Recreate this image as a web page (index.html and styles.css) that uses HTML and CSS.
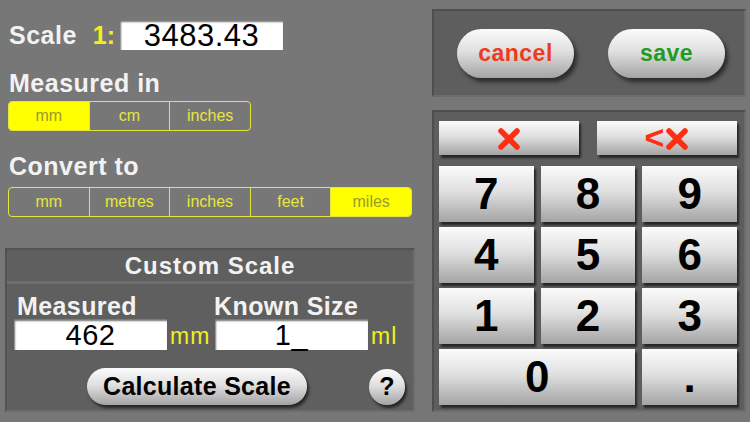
FILE: index.html
```html
<!DOCTYPE html>
<html lang="en">
<head>
    <meta charset="UTF-8">
    <meta name="viewport" content="width=device-width, initial-scale=1.0">
    <title>Scale Converter</title>
    <link rel="stylesheet" href="styles.css">
</head>
<body>
    <div id="app">
        <div id="left">
            <div class="scale-row">
                <span class="title">Scale</span>
                <span class="ratio">1:</span>
                <div class="field scale-field">3483.43</div>
            </div>

            <h2 class="title section measured-title">Measured in</h2>
            <div class="segments seg-measured">
                <span class="seg on">mm</span>
                <span class="seg">cm</span>
                <span class="seg">inches</span>
            </div>

            <h2 class="title section convert-title">Convert to</h2>
            <div class="segments seg-convert">
                <span class="seg">mm</span>
                <span class="seg">metres</span>
                <span class="seg">inches</span>
                <span class="seg">feet</span>
                <span class="seg on">miles</span>
            </div>

            <!-- Custom Scale Section -->
            <div id="custom">
                <div class="custom-head">Custom Scale</div>
                <div class="custom-body">
                    <div class="custom-grid">
                        <span class="field-label">Measured</span>
                        <span class="field-label known">Known Size</span>
                        <div class="field small-field">462</div>
                        <span class="unit">mm</span>
                        <div class="field small-field">1_</div>
                        <span class="unit">ml</span>
                    </div>
                    <div class="custom-actions">
                        <button type="button" class="calc">Calculate Scale</button>
                        <button type="button" class="help">?</button>
                    </div>
                </div>
            </div>
        </div>

        <div id="right">
            <div class="panel actions">
                <button type="button" class="pill cancel">cancel</button>
                <button type="button" class="pill save">save</button>
            </div>

            <div class="panel keypad">
                <div class="clear-row">
                    <button type="button" class="key clear">
                        <svg class="cross" viewBox="0 0 24 24"><path d="M4 4 L20 20 M20 4 L4 20"/></svg>
                    </button>
                    <button type="button" class="key clear">
                        <span class="back">&lt;</span>
                        <svg class="cross" viewBox="0 0 24 24"><path d="M4 4 L20 20 M20 4 L4 20"/></svg>
                    </button>
                </div>
                <div class="digits">
                    <button type="button" class="key">7</button>
                    <button type="button" class="key">8</button>
                    <button type="button" class="key">9</button>
                    <button type="button" class="key">4</button>
                    <button type="button" class="key">5</button>
                    <button type="button" class="key">6</button>
                    <button type="button" class="key">1</button>
                    <button type="button" class="key">2</button>
                    <button type="button" class="key">3</button>
                    <button type="button" class="key zero">0</button>
                    <button type="button" class="key">.</button>
                </div>
            </div>
        </div>
    </div>
</body>
</html>
```

FILE: styles.css
```css
* {
    margin: 0;
    padding: 0;
    box-sizing: border-box;
    font-family: "Liberation Sans", Arial, Helvetica, sans-serif;
}

body {
    background-color: #777777;
    width: 750px;
    height: 422px;
    overflow: hidden;
}

button {
    border: none;
    font-family: "Liberation Sans", Arial, Helvetica, sans-serif;
    cursor: pointer;
}

#app {
    display: flex;
    width: 750px;
    height: 422px;
}

#left {
    width: 420px;
}

.title {
    color: #f2f2f2;
    font-size: 25px;
    font-weight: bold;
    letter-spacing: 0.5px;
}

.scale-row {
    display: flex;
    align-items: center;
    height: 30px;
    margin-top: 20px;
    padding-left: 9px;
}

.ratio {
    color: #f0f020;
    font-size: 25px;
    font-weight: bold;
    margin-left: 16px;
}

.field {
    background-color: #ffffff;
    color: #000000;
    text-align: center;
    box-shadow: inset 1px 2px 2px rgba(0, 0, 0, 0.55);
}

.scale-field {
    width: 163px;
    height: 30px;
    margin-left: 5px;
    font-size: 31px;
    letter-spacing: 0.5px;
    line-height: 32px;
}

.section {
    height: 28px;
    line-height: 28px;
    padding-left: 9px;
}

.measured-title {
    margin-top: 19px;
}

.convert-title {
    margin-top: 21px;
}

.segments {
    display: flex;
    height: 30px;
    margin-left: 8px;
    border: 1px solid #e4e43c;
    border-radius: 4px;
    overflow: hidden;
}

.seg-measured {
    width: 243px;
    margin-top: 4px;
}

.seg-convert {
    width: 404px;
    margin-top: 7px;
}

.seg {
    flex: 1;
    text-align: center;
    line-height: 28px;
    font-size: 16px;
    color: #e6e640;
    border-left: 1px solid #e4e43c;
}

.seg:first-child {
    border-left: none;
}

.seg.on {
    background-color: #ffff00;
    color: #9a9a2c;
}

#custom {
    width: 410px;
    height: 164px;
    margin-top: 31px;
    margin-left: 5px;
    background-color: #5f5f5f;
    border: 2px solid;
    border-color: #525252 #6c6c6c #6c6c6c #525252;
}

.custom-head {
    height: 34px;
    line-height: 32px;
    text-align: center;
    color: #f2f2f2;
    font-size: 24px;
    font-weight: bold;
    letter-spacing: 1px;
    border-bottom: 3px solid #6e6e6e;
}

.custom-body {
    padding: 10px 7px 0 7px;
}

.custom-grid {
    display: grid;
    grid-template-columns: 153px 48px 153px auto;
    grid-template-rows: 24px 31px;
    row-gap: 1px;
}

.field-label {
    grid-column: 1 / 3;
    padding-left: 3px;
    color: #f2f2f2;
    font-size: 25px;
    font-weight: bold;
    letter-spacing: 0.4px;
    line-height: 24px;
}

.field-label.known {
    grid-column: 3 / 5;
    padding-left: 0;
    margin-left: -1px;
}

.small-field {
    font-size: 29px;
    letter-spacing: 0.5px;
    line-height: 33px;
}

.unit {
    color: #f0f020;
    font-size: 23px;
    letter-spacing: 1px;
    line-height: 34px;
    padding-left: 3px;
}

.custom-actions {
    display: flex;
    align-items: center;
    margin-top: 18px;
}

.calc,
.help,
.pill,
.key {
    background: linear-gradient(to bottom, #fbfbfb 0%, #e0e0e0 45%, #a4a4a4 100%);
    color: #000000;
    font-weight: bold;
}

.calc {
    width: 220px;
    height: 37px;
    margin-left: 73px;
    border-radius: 19px;
    font-size: 25px;
    letter-spacing: 0.3px;
    box-shadow: 2px 3px 3px rgba(0, 0, 0, 0.6);
}

.help {
    width: 36px;
    height: 36px;
    margin-left: 62px;
    border-radius: 50%;
    font-size: 25px;
    box-shadow: 2px 3px 3px rgba(0, 0, 0, 0.6);
}

#right {
    width: 314px;
    margin-left: 12px;
    padding-top: 9px;
}

.panel {
    background-color: #5e5e5e;
    border: 2px solid;
    border-color: #4e4e4e #6c6c6c #6c6c6c #4e4e4e;
}

.actions {
    display: flex;
    align-items: center;
    height: 88px;
    padding-left: 23px;
    gap: 34px;
}

.pill {
    width: 117px;
    height: 49px;
    border-radius: 25px;
    font-size: 23px;
    letter-spacing: 0.5px;
    box-shadow: 3px 4px 4px rgba(0, 0, 0, 0.55);
}

.cancel {
    color: #ee3a1e;
}

.save {
    color: #1f9a22;
}

.keypad {
    height: 302px;
    margin-top: 13px;
    padding: 9px 7px 0 5px;
}

.clear-row {
    display: grid;
    grid-template-columns: 140px 140px;
    gap: 18px;
    height: 34px;
}

.key {
    display: flex;
    align-items: center;
    justify-content: center;
    font-size: 44px;
    box-shadow: 2px 3px 2px rgba(0, 0, 0, 0.6);
}

.clear {
    padding-top: 2px;
}

.cross {
    width: 24px;
    height: 24px;
}

.cross path {
    stroke: #ff2e12;
    stroke-width: 5.5;
    stroke-linecap: round;
    fill: none;
}

.back {
    color: #ff2e12;
    font-size: 34px;
    line-height: 24px;
    margin-right: 1px;
    margin-top: -4px;
}

.digits {
    display: grid;
    grid-template-columns: repeat(3, 1fr);
    grid-template-rows: repeat(4, 56px);
    gap: 5px 7px;
    margin-top: 11px;
}

.zero {
    grid-column: 1 / 3;
}
```
